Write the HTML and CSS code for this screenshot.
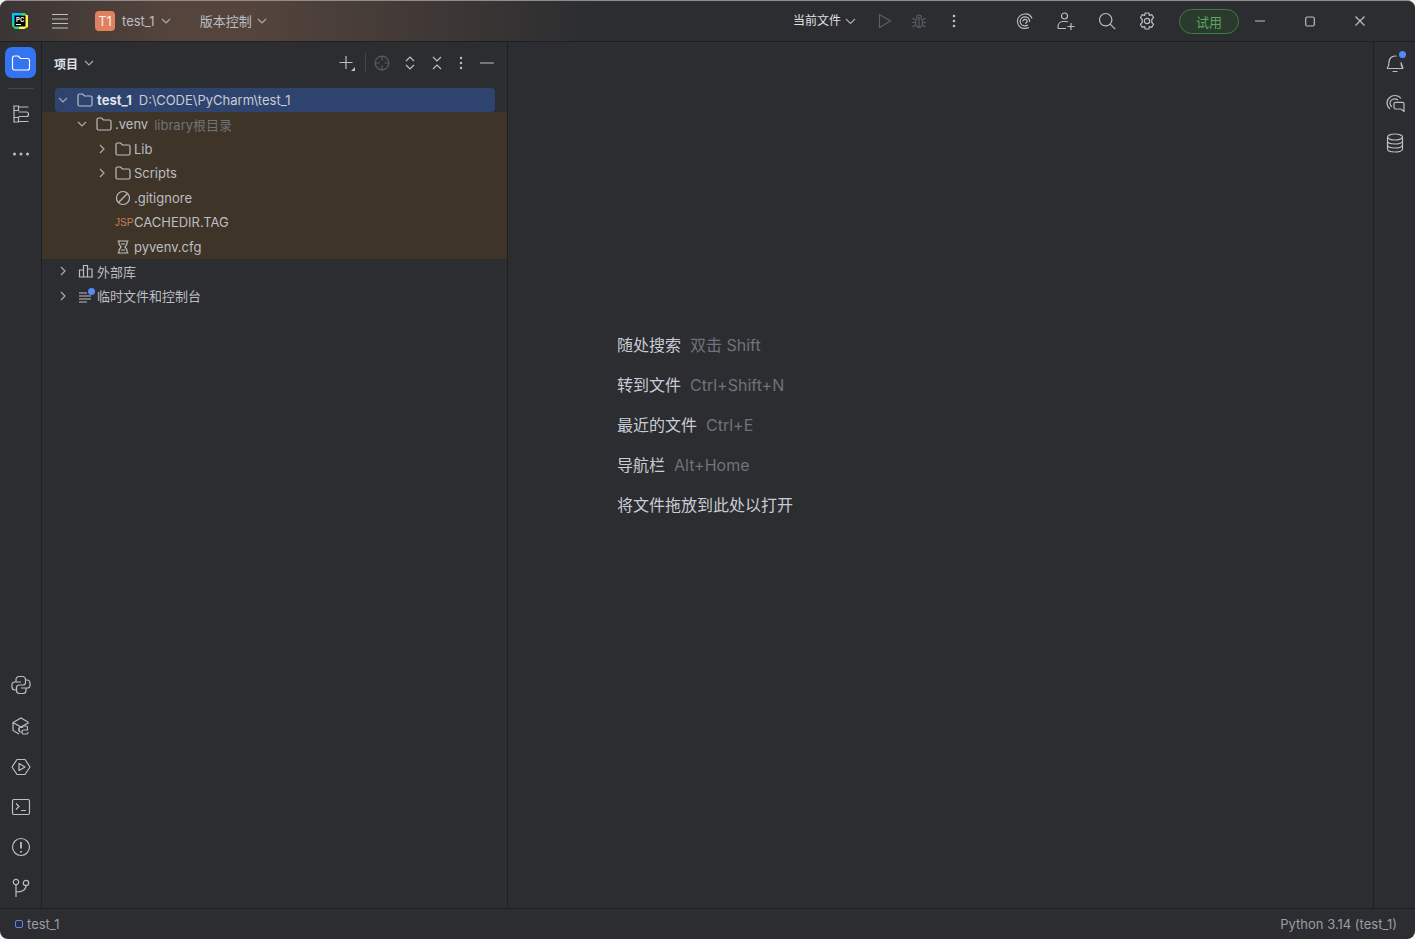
FILE: index.html
```html
<!DOCTYPE html>
<html lang="zh-CN">
<head>
    <meta charset="UTF-8">
    <meta name="viewport" content="width=device-width, initial-scale=1.0">
    <title>test_1</title>
    <link rel="stylesheet" href="styles.css">
</head>
<body>
    <div class="window">
        <header class="titlebar">
            <div class="title-left">
                <svg class="app-logo" width="18" height="18" viewBox="0 0 18 18">
                    <path d="M1 1h13l3 3v9h-3v4H4l-3-3z" fill="#21d789"/>
                    <path d="M1 1h10L9 6 1 11z" fill="#07c3f2"/>
                    <path d="M11 3h6v12l-4 2H8z" fill="#fcf84a"/>
                    <rect x="3.5" y="3.5" width="11" height="11" fill="#000"/>
                    <rect x="5" y="12" width="5" height="1" fill="#fff"/>
                    <text class="logo-text" x="5" y="9.5">PC</text>
                </svg>
                <svg class="menu-icon" width="18" height="16" viewBox="0 0 18 16">
                    <path d="M1 1.5h16M1 6h16M1 10.500h16M1 15h16" stroke="#bcbec4" stroke-width="1.2" fill="none"/>
                </svg>
                <span class="project-badge">T1</span>
                <span class="title-item project-name">test_1</span>
                <svg class="chevron" width="10" height="6" viewBox="0 0 10 6"><path d="M1 1l4 4 4-4" /></svg>
                <span class="title-item vcs-name">版本控制</span>
                <svg class="chevron" width="10" height="6" viewBox="0 0 10 6"><path d="M1 1l4 4 4-4" /></svg>
            </div>
            <div class="title-run">
                <span class="title-item run-config">当前文件</span>
                <svg class="chevron chevron-big" width="11" height="7" viewBox="0 0 11 7"><path d="M1 1l4.500 4.500L10 1" /></svg>
                <svg class="run-icon" width="14" height="16" viewBox="0 0 14 16"><path d="M1.500 1.500v13l11-6.500z" /></svg>
                <svg class="run-icon debug-icon" width="16" height="16" viewBox="0 0 16 16">
                    <ellipse cx="8" cy="9.500" rx="3.500" ry="5"/>
                    <path d="M5.500 4.500a2.500 2.500 0 0 1 5 0M1.500 5l3 2M14.500 5l-3 2M1 9.500h3.500M15 9.500h-3.500M1.500 14l3-2M14.500 14l-3-2M8 5v9"/>
                </svg>
                <svg class="dots-icon" width="4" height="14" viewBox="0 0 4 14"><circle cx="2" cy="2" r="1.300"/><circle cx="2" cy="7" r="1.300"/><circle cx="2" cy="12" r="1.300"/></svg>
            </div>
            <div class="title-tools">
                <svg class="tool-icon" width="18" height="18" viewBox="0 0 18 18">
                    <path d="M16 6.500C14.500 3 11.500 1.500 8.500 2 4.500 2.500 1.500 5.500 1.500 9.500c0 3.500 2.500 6.500 6 6.800 1.800.2 3.700-.1 5.500-.8"/>
                    <path d="M13.500 10c.5-3-1.500-5.200-4.300-5.200-2.800 0-5 2-5 4.700 0 2.500 2.100 4.300 4.700 4.300 1.300 0 2.300-.3 3.100-.8"/>
                    <path d="M6.800 9.500c0-1.300 1-2.200 2.300-2.200 1.200 0 2 .8 2 2 0 1.100-.9 1.800-2 1.800"/>
                </svg>
                <svg class="tool-icon" width="20" height="20" viewBox="0 0 20 20">
                    <circle cx="8.500" cy="5" r="3"/>
                    <path d="M2 17.500v-1.500c0-3 2-5.500 5-5.500h3c1 0 1.500.2 2 .5M2 17.500h8M15 12v7M11.500 15.500h7"/>
                </svg>
                <svg class="tool-icon" width="18" height="18" viewBox="0 0 18 18">
                    <circle cx="7.700" cy="7.700" r="6.200"/><path d="M12.200 12.200l5 5"/>
                </svg>
                <svg class="tool-icon" width="18" height="18" viewBox="0 0 18 18">
                    <path d="M7.200 1h3.600l.6 2.500 2.300-.9 1.900 3.100-1.800 1.800v3l1.800 1.800-1.900 3.100-2.300-.9-.6 2.500H7.200l-.6-2.500-2.300.9-1.900-3.100 1.800-1.800v-3L2.400 5.700l1.900-3.100 2.300.9z" stroke-linejoin="round"/>
                    <circle cx="9" cy="9" r="2.700"/>
                </svg>
                <span class="trial-button">试用</span>
            </div>
            <div class="window-controls">
                <svg width="10" height="2" viewBox="0 0 10 2"><path d="M0 1h10"/></svg>
                <svg width="10" height="11" viewBox="0 0 10 11"><rect x=".7" y="1" width="8.600" height="9" rx="1.500"/></svg>
                <svg width="10" height="10" viewBox="0 0 10 10"><path d="M.5.500l9 9M9.500.500l-9 9"/></svg>
            </div>
        </header>

        <div class="workspace">
            <aside class="left-strip">
                <div class="strip-top">
                    <div class="strip-active">
                        <svg width="20" height="18" viewBox="0 0 20 18"><path d="M1.500 4a2 2 0 0 1 2-2h3.700l2.300 2.500h7a2 2 0 0 1 2 2V14a2 2 0 0 1-2 2h-13a2 2 0 0 1-2-2z"/></svg>
                    </div>
                    <div class="strip-sep"></div>
                    <svg class="strip-icon" width="18" height="18" viewBox="0 0 18 18">
                        <path d="M2 1h4.500v4.500H2zM2 12.500h4.500V17H2zM6.500 7h8a2 2 0 0 1 2 2v.5a2 2 0 0 1-2 2h-8M6.500 2h10M6.500 16.500h10M2 5.500v7"/>
                    </svg>
                    <svg class="strip-dots" width="18" height="4" viewBox="0 0 18 4"><circle cx="2.500" cy="2" r="1.500"/><circle cx="9" cy="2" r="1.500"/><circle cx="15.500" cy="2" r="1.500"/></svg>
                </div>
                <div class="strip-bottom">
                    <svg class="strip-icon" width="20" height="20" viewBox="0 0 20 20">
                        <path d="M10 1.500h-2a3 3 0 0 0-3 3V7H3.500A2.500 2.500 0 0 0 1 9.500v2.500a3 3 0 0 0 3 3h1.500v-2.500A2.500 2.500 0 0 1 8 10h4a2.500 2.500 0 0 0 2.500-2.500v-3a3 3 0 0 0-3-3zM5 7h5"/>
                        <path d="M10 18.500h2a3 3 0 0 0 3-3V13h1.500a2.500 2.500 0 0 0 2.500-2.500V8a3 3 0 0 0-3-3h-1.500M10 13h5M5.500 12.500v3a3 3 0 0 0 3 3H10"/>
                    </svg>
                    <svg class="strip-icon" width="20" height="20" viewBox="0 0 20 20">
                        <path d="M8 18l-6-3.500v-8L10 2l7 4v2M2 6.500L10 11l7-4M8 11.500V15"/>
                        <path d="M12 10h3a1.500 1.500 0 0 1 1.500 1.500V14h-4a1.500 1.500 0 0 0-1.500 1.500v1a1.500 1.500 0 0 0 1.500 1.500h3a1.500 1.500 0 0 0 1.500-1.500V16M10.500 16h-1A1.500 1.500 0 0 1 8 14.500V13a1.500 1.500 0 0 1 1.500-1.500H12"/>
                    </svg>
                    <svg class="strip-icon" width="20" height="20" viewBox="0 0 20 20">
                        <path d="M6 2.500h8l5 7.500-5 7.500H6L1 10z" stroke-linejoin="round"/><path d="M8 6.500v7l6-3.500z" stroke-linejoin="round"/>
                    </svg>
                    <svg class="strip-icon" width="20" height="18" viewBox="0 0 20 18">
                        <rect x="1.500" y="1.500" width="17" height="15" rx="1.500"/><path d="M5 5.500l3 3-3 3M10 12.500h5"/>
                    </svg>
                    <svg class="strip-icon" width="20" height="20" viewBox="0 0 20 20">
                        <circle cx="10" cy="10" r="8.500"/><path d="M10 5v6.500M10 14v1.500" stroke-width="1.800"/>
                    </svg>
                    <svg class="strip-icon" width="18" height="20" viewBox="0 0 18 20">
                        <circle cx="4" cy="4" r="2.700"/><circle cx="14" cy="5" r="2.700"/><path d="M4 6.700V19M4 14c6 0 10-2 10-6.300"/>
                    </svg>
                </div>
            </aside>

            <section class="project-panel">
                <div class="panel-header">
                    <span class="panel-title">项目</span>
                    <svg class="chevron" width="10" height="6" viewBox="0 0 10 6"><path d="M1 1l4 4 4-4" /></svg>
                    <div class="panel-actions">
                        <svg class="action-plus" width="18" height="18" viewBox="0 0 18 18"><path d="M8 2v13M1.500 8.500h13"/><path class="corner" d="M17 13v4h-4z"/></svg>
                        <span class="action-sep"></span>
                        <svg class="action-target" width="16" height="16" viewBox="0 0 16 16"><circle cx="8" cy="8" r="6.800"/><path d="M8 1v4.500M8 10.500V15M1 8h4.500M10.500 8H15"/></svg>
                        <svg width="10" height="16" viewBox="0 0 10 16"><path d="M1 6l4-4 4 4M1 10l4 4 4-4"/></svg>
                        <svg width="10" height="16" viewBox="0 0 10 16"><path d="M1 2l4 4 4-4M1 14l4-4 4 4"/></svg>
                        <svg class="action-dots" width="4" height="14" viewBox="0 0 4 14"><circle cx="2" cy="2" r="1.200"/><circle cx="2" cy="7" r="1.200"/><circle cx="2" cy="12" r="1.200"/></svg>
                        <svg width="14" height="2" viewBox="0 0 14 2"><path d="M0 1h14"/></svg>
                    </div>
                </div>
                <ul class="tree">
                    <li class="tree-row row-selected depth-0">
                        <svg class="twist" width="10" height="6" viewBox="0 0 10 6"><path d="M1 1l4 4 4-4"/></svg>
                        <svg class="folder" width="16" height="14" viewBox="0 0 16 14"><path d="M1 2.500A1.500 1.500 0 0 1 2.500 1h3l2 2h6A1.500 1.500 0 0 1 15 4.500v7a1.500 1.500 0 0 1-1.500 1.500h-11A1.500 1.500 0 0 1 1 11.500z"/></svg>
                        <span class="name-bold">test_1</span><span class="name-path">D:\CODE\PyCharm\test_1</span>
                    </li>
                    <li class="tree-row row-excluded depth-1">
                        <svg class="twist" width="10" height="6" viewBox="0 0 10 6"><path d="M1 1l4 4 4-4"/></svg>
                        <svg class="folder" width="16" height="14" viewBox="0 0 16 14"><path d="M1 2.500A1.500 1.500 0 0 1 2.500 1h3l2 2h6A1.500 1.500 0 0 1 15 4.500v7a1.500 1.500 0 0 1-1.500 1.500h-11A1.500 1.500 0 0 1 1 11.500z"/></svg>
                        <span>.venv</span><span class="name-hint">library根目录</span>
                    </li>
                    <li class="tree-row row-excluded depth-2">
                        <svg class="twist" width="6" height="10" viewBox="0 0 6 10"><path d="M1 1l4 4-4 4"/></svg>
                        <svg class="folder" width="16" height="14" viewBox="0 0 16 14"><path d="M1 2.500A1.500 1.500 0 0 1 2.500 1h3l2 2h6A1.500 1.500 0 0 1 15 4.500v7a1.500 1.500 0 0 1-1.500 1.500h-11A1.500 1.500 0 0 1 1 11.500z"/></svg>
                        <span>Lib</span>
                    </li>
                    <li class="tree-row row-excluded depth-2">
                        <svg class="twist" width="6" height="10" viewBox="0 0 6 10"><path d="M1 1l4 4-4 4"/></svg>
                        <svg class="folder" width="16" height="14" viewBox="0 0 16 14"><path d="M1 2.500A1.500 1.500 0 0 1 2.500 1h3l2 2h6A1.500 1.500 0 0 1 15 4.500v7a1.500 1.500 0 0 1-1.500 1.500h-11A1.500 1.500 0 0 1 1 11.500z"/></svg>
                        <span>Scripts</span>
                    </li>
                    <li class="tree-row row-excluded depth-2 leaf">
                        <svg class="folder" width="16" height="16" viewBox="0 0 16 16"><circle cx="8" cy="8" r="6.500"/><path d="M3.500 12.500l9-9"/></svg>
                        <span>.gitignore</span>
                    </li>
                    <li class="tree-row row-excluded depth-2 leaf">
                        <span class="jsp-icon">JSP</span>
                        <span>CACHEDIR.TAG</span>
                    </li>
                    <li class="tree-row row-excluded depth-2 leaf">
                        <svg class="folder" width="16" height="14" viewBox="0 0 16 14"><path d="M2.500 1h11M2.500 13h11M4 1v3l2 3-2 3v3M12 1v3l-2 3 2 3v3M6 4h4M6 10h4" /></svg>
                        <span>pyvenv.cfg</span>
                    </li>
                    <li class="tree-row depth-0">
                        <svg class="twist" width="6" height="10" viewBox="0 0 6 10"><path d="M1 1l4 4-4 4"/></svg>
                        <svg class="folder" width="16" height="14" viewBox="0 0 16 14"><path d="M1.500 13V6h4v7zM5.500 13V1.500h4V13zM9.500 13V5h4.500v8zM1 13h14"/></svg>
                        <span>外部库</span>
                    </li>
                    <li class="tree-row depth-0">
                        <svg class="twist" width="6" height="10" viewBox="0 0 6 10"><path d="M1 1l4 4-4 4"/></svg>
                        <span class="scratch-icon">
                            <svg class="folder" width="16" height="14" viewBox="0 0 16 14"><path d="M1 4h8M1 7h12M1 10h12M1 13h8"/></svg>
                            <span class="scratch-dot"></span>
                        </span>
                        <span>临时文件和控制台</span>
                    </li>
                </ul>
            </section>

            <main class="editor">
                <ul class="hints">
                    <li><span class="hint-label">随处搜索</span><span class="hint-key">双击 Shift</span></li>
                    <li><span class="hint-label">转到文件</span><span class="hint-key">Ctrl+Shift+N</span></li>
                    <li><span class="hint-label">最近的文件</span><span class="hint-key">Ctrl+E</span></li>
                    <li><span class="hint-label">导航栏</span><span class="hint-key">Alt+Home</span></li>
                    <li><span class="hint-label">将文件拖放到此处以打开</span></li>
                </ul>
            </main>

            <aside class="right-strip">
                <span class="bell-wrap">
                    <svg class="strip-icon" width="18" height="20" viewBox="0 0 18 20">
                        <path d="M1 15.500c1.500-1.500 2-3 2-6 0-4 2.500-6.500 6-6.500.5 0 1 0 1.500.2M15 9.500c0 3 .5 4.500 2 6zM1 15.500h16M6.500 18.500h5"/>
                    </svg>
                    <span class="bell-dot"></span>
                </span>
                <svg class="strip-icon" width="20" height="18" viewBox="0 0 20 18">
                    <path d="M16 4.500C14.500 2.500 12.500 1.500 10 1.500c-4.500 0-8 3.500-8 7.500 0 2.500 1.200 4.500 3 6"/>
                    <path d="M13 6c-1-.8-2-1.200-3.300-1.200C7 4.800 5 7 5 9.300c0 1.500.8 2.800 2 3.500"/>
                    <path d="M9 11.500V9.800a1.500 1.500 0 0 1 1.500-1.500h7a1.500 1.500 0 0 1 1.500 1.500v7.700l-3-2.500h-5.500A1.500 1.500 0 0 1 9 13.500z"/>
                </svg>
                <svg class="strip-icon" width="18" height="20" viewBox="0 0 18 20">
                    <ellipse cx="9" cy="4" rx="7.500" ry="3"/>
                    <path d="M1.500 4v12c0 1.700 3.400 3 7.500 3s7.500-1.300 7.500-3V4M1.500 8c0 1.700 3.400 3 7.500 3s7.500-1.300 7.500-3M1.500 12c0 1.700 3.400 3 7.500 3s7.500-1.300 7.500-3"/>
                </svg>
            </aside>
        </div>

        <footer class="statusbar">
            <div class="status-left"><span class="status-square"></span><span>test_1</span></div>
            <span>Python 3.14 (test_1)</span>
        </footer>
    </div>
</body>
</html>
```
FILE: styles.css
```css
* {
    margin: 0;
    padding: 0;
    box-sizing: border-box;
}

html, body {
    height: 100%;
    overflow: hidden;
    background-color: #f2f2f2;
}

body {
    font-family: Inter, "Noto Sans CJK SC", sans-serif;
    font-size: 13px;
    color: #bcbec4;
}

svg {
    display: block;
    flex-shrink: 0;
    fill: none;
    stroke: #bcbec4;
    stroke-width: 1.2;
}

ul {
    list-style: none;
}

.window {
    display: flex;
    flex-direction: column;
    height: 100%;
    background-color: #2b2d30;
    border-radius: 8px;
    border-top: 1px solid #8d8d8d;
    overflow: hidden;
}

/* Title bar */
.titlebar {
    display: flex;
    align-items: center;
    height: 41px;
    flex-shrink: 0;
    border-bottom: 1px solid #1e1f22;
    background: linear-gradient(90deg, #3a3534 0%, #54443c 12%, #54443c 18%, #2b2d30 42%);
}

.title-left {
    display: flex;
    align-items: center;
    width: 785px;
    padding-left: 11px;
}

.app-logo {
    stroke: none;
    margin-right: 22px;
}

.logo-text {
    font-size: 6px;
    font-weight: 700;
    fill: #fff;
}

.menu-icon {
    margin-right: 26px;
}

.project-badge {
    display: flex;
    align-items: center;
    justify-content: center;
    width: 20px;
    height: 20px;
    margin-right: 7px;
    border-radius: 4px;
    background-color: #e0805f;
    color: #f5efe8;
    font-size: 13px;
}

.title-item {
    font-size: 13px;
    line-height: 18px;
}

.project-name {
    margin-right: 6px;
}

.vcs-name {
    margin: 0 5px 0 29px;
}

.chevron {
    stroke: #a8abb0;
}

.title-run {
    display: flex;
    align-items: center;
    width: 235px;
    padding-left: 8px;
}

.run-config {
    margin-right: 4px;
    font-size: 12px;
    color: #dfe1e5;
}

.chevron-big {
    margin-right: 22px;
}

.run-icon {
    stroke: #5a5d63;
    margin-right: 20px;
}

.debug-icon {
    margin-right: 25px;
    margin-left: -1px;
}

.dots-icon {
    stroke: none;
    fill: #bcbec4;
}

.title-tools {
    display: flex;
    align-items: center;
    gap: 22px;
    width: 260px;
    margin-left: -4px;
}

.trial-button {
    display: flex;
    align-items: center;
    justify-content: center;
    width: 60px;
    height: 25px;
    margin-left: 1px;
    border: 1px solid #3f7a45;
    border-radius: 13px;
    background-color: #2a3a2d;
    color: #57a85f;
    font-size: 13px;
}

.window-controls {
    display: flex;
    align-items: center;
    justify-content: space-between;
    width: 110px;
    margin-left: -21px;
}

/* Main area */
.workspace {
    display: flex;
    flex-grow: 1;
    min-height: 0;
}

.left-strip {
    display: flex;
    flex-direction: column;
    justify-content: space-between;
    width: 42px;
    flex-shrink: 0;
    border-right: 1px solid #1e1f22;
    padding: 5px 0 10px;
}

.strip-top, .strip-bottom {
    display: flex;
    flex-direction: column;
    align-items: center;
}

.strip-active {
    display: flex;
    align-items: center;
    justify-content: center;
    width: 31px;
    height: 31px;
    border-radius: 7px;
    background-color: #3574f0;
}

.strip-active svg {
    stroke: #fff;
}

.strip-sep {
    width: 26px;
    height: 1px;
    margin: 10px 0 16px;
    background-color: #43454a;
}

.strip-dots {
    stroke: none;
    fill: #bcbec4;
    margin-top: 29px;
}

.strip-bottom {
    gap: 21px;
}

.project-panel {
    width: 466px;
    flex-shrink: 0;
    border-right: 1px solid #1e1f22;
}

.panel-header {
    display: flex;
    align-items: center;
    height: 42px;
    padding-left: 12px;
}

.panel-title {
    margin-right: 6px;
    font-size: 12px;
    font-weight: 700;
    color: #dfe1e5;
}

.panel-actions {
    display: flex;
    align-items: center;
    gap: 17px;
    margin-left: auto;
    padding-right: 13px;
}

.action-plus .corner {
    fill: #bcbec4;
    stroke: none;
}

.action-plus {
    margin-right: -8px;
}

.action-sep {
    width: 1px;
    height: 20px;
    background-color: #43454a;
}

.action-target {
    stroke: #5a5d63;
    margin: 0 -2px 0 -9px;
}

.action-dots {
    stroke: none;
    fill: #bcbec4;
}

.tree {
    padding-top: 4px;
}

.tree-row {
    display: flex;
    align-items: center;
    height: 24.5px;
    font-size: 13px;
    white-space: nowrap;
}

.twist {
    margin-right: 9px;
    stroke: #a8abb0;
}

.depth-0 {
    padding-left: 16px;
}

.depth-1 {
    padding-left: 35px;
}

.depth-2 {
    padding-left: 57px;
}

.depth-2 .twist {
    margin-right: 10px;
}

.depth-2.leaf {
    padding-left: 73px;
}

.depth-0:not(.row-selected) .twist {
    margin: 0 12px 0 2px;
}

.folder {
    margin-right: 3px;
    stroke: #bcbec4;
}

.row-selected {
    height: 24px;
    margin: 0 12px 0 13px;
    padding-left: 3px;
    border-radius: 4px;
    background-color: #2e436e;
    color: #dfe1e5;
}

.row-excluded {
    background-color: #3f3428;
}

.name-bold {
    font-weight: 700;
    margin: 0 7px 0 1px;
    color: #dfe1e5;
}

.name-path {
    color: #c9ccd4;
}

.name-hint {
    margin-left: 6px;
    color: #6f737a;
}

.jsp-icon {
    width: 16px;
    margin-right: 3px;
    font-family: "Liberation Sans Narrow", "Liberation Sans", sans-serif;
    font-size: 10px;
    text-align: center;
    color: #c77d55;
}

.scratch-icon {
    position: relative;
    display: block;
}

.scratch-dot {
    position: absolute;
    top: -1px;
    right: 2px;
    width: 7px;
    height: 7px;
    border-radius: 50%;
    background-color: #548af7;
}

/* Editor placeholder */
.editor {
    flex-grow: 1;
    padding: 288px 0 0 109px;
    background-color: #2b2d30;
}

.hints li {
    display: flex;
    gap: 9px;
    height: 40px;
    font-size: 16px;
    line-height: 30px;
}

.hint-label {
    color: #c9ccd4;
}

.hint-key {
    color: #6f737a;
}

.right-strip {
    display: flex;
    flex-direction: column;
    align-items: center;
    gap: 21px;
    width: 42px;
    flex-shrink: 0;
    border-left: 1px solid #1e1f22;
    padding-top: 11px;
}

.bell-wrap {
    position: relative;
    display: block;
}

.bell-dot {
    position: absolute;
    top: -2px;
    right: -2px;
    width: 7px;
    height: 7px;
    border-radius: 50%;
    background-color: #548af7;
}

/* Status bar */
.statusbar {
    display: flex;
    align-items: center;
    justify-content: space-between;
    height: 31px;
    flex-shrink: 0;
    padding: 0 18px 0 15px;
    border-top: 1px solid #1e1f22;
    color: #9a9da3;
    font-size: 13px;
}

.status-left {
    display: flex;
    align-items: center;
    gap: 4px;
}

.status-square {
    width: 8px;
    height: 8px;
    border: 1px solid #548af7;
    border-radius: 2px;
}
```
